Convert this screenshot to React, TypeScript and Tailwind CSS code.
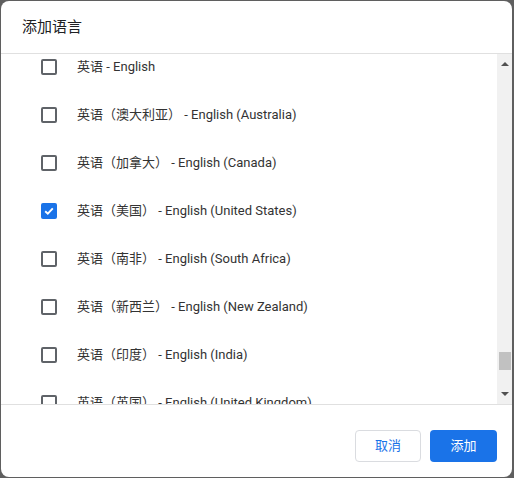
import React from "react";

const langs = [
  { zh: "英语", en: "English" },
  { zh: "英语（澳大利亚）", en: "English (Australia)" },
  { zh: "英语（加拿大）", en: "English (Canada)" },
  { zh: "英语（美国）", en: "English (United States)", checked: true },
  { zh: "英语（南非）", en: "English (South Africa)" },
  { zh: "英语（新西兰）", en: "English (New Zealand)" },
  { zh: "英语（印度）", en: "English (India)" },
  { zh: "英语（英国）", en: "English (United Kingdom)" },
];

function Checkbox({ checked }: { checked?: boolean }) {
  if (checked) {
    return (
      <span className="flex h-4 w-4 items-center justify-center rounded-[2px] bg-[#1a73e8]">
        <svg width="12" height="12" viewBox="0 0 12 12" fill="none">
          <path d="M2.2 6.2 L4.8 8.7 L9.8 3.4" stroke="white" strokeWidth="1.9" />
        </svg>
      </span>
    );
  }
  return <span className="block h-4 w-4 rounded-[2px] border-2 border-[#5f6368]" />;
}

export default function App() {
  return (
    <div
      className="h-[478px] w-[514px] bg-[#5f5f5f] pl-px pt-px"
      style={{ fontFamily: 'Roboto, "Noto Sans CJK SC", sans-serif' }}
    >
      <div className="flex h-[476px] w-[511px] flex-col overflow-hidden rounded-lg bg-white">
        <div className="flex h-[53px] shrink-0 items-center border-b border-[#e0e0e0] pl-[21px] pt-px text-[15px] text-[#202124]">
          添加语言
        </div>
        <div className="flex h-[350px] shrink-0">
          <div className="flex-1 overflow-hidden">
            <div className="-mt-[11px]">
              {langs.map((l) => (
                <div key={l.en} className="flex h-12 items-center pl-10 text-[13px] text-[#333333]">
                  <Checkbox checked={l.checked} />
                  <span className="ml-5">
                    {l.zh} - {l.en}
                  </span>
                </div>
              ))}
            </div>
          </div>
          <div className="relative flex w-[15px] flex-col items-center bg-[#f1f1f1]">
            <div className="flex h-[17px] items-center justify-center pt-[2px]">
              <svg width="8" height="4" viewBox="0 0 8 4">
                <path d="M0 4 L4 0 L8 4 Z" fill="#505050" />
              </svg>
            </div>
            <div className="flex-1" />
            <div className="mb-[17px] h-[18px] w-[12px] bg-[#c1c1c1]" />
            <div className="flex h-[17px] items-center justify-center pb-[3px]">
              <svg width="8" height="4" viewBox="0 0 8 4">
                <path d="M0 0 L8 0 L4 4 Z" fill="#505050" />
              </svg>
            </div>
          </div>
        </div>
        <div className="flex flex-1 items-end justify-end gap-[9px] border-t border-[#e0e0e0] pr-[15px] pb-[15px]">
          <button className="h-8 w-[66px] rounded border border-[#dadce0] bg-white text-[13px] text-[#1a73e8]">
            取消
          </button>
          <button className="h-8 w-[67px] rounded bg-[#1a73e8] text-[13px] text-white">
            添加
          </button>
        </div>
      </div>
    </div>
  );
}
